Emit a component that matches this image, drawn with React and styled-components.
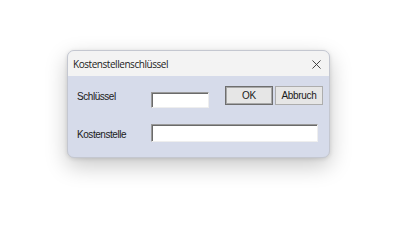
import styled, { createGlobalStyle } from "styled-components";

const Global = createGlobalStyle`
  html, body {
    margin: 0;
    padding: 0;
    background: #ffffff;
  }
  body {
    width: 400px;
    height: 247px;
    overflow: hidden;
    font-family: "Liberation Sans", Arial, sans-serif;
  }
`;

const Page = styled.div`
  padding: 50px 0 0 67px;
`;

const Dialog = styled.div`
  width: 263px;
  height: 108px;
  border-radius: 7px;
  overflow: hidden;
  background: #d6dbea;
  border: 1px solid #c4c7d0;
  box-sizing: border-box;
  box-shadow: 0 8px 22px rgba(0, 0, 0, 0.22), 0 1px 4px rgba(0, 0, 0, 0.12);
  display: flex;
  flex-direction: column;
`;

const TitleBar = styled.div`
  height: 25px;
  background: #f3f3f3;
  display: flex;
  align-items: center;
  justify-content: space-between;
  padding: 0 8px 0 5px;
  font-family: "Open Sans", "Noto Sans", sans-serif;
  font-size: 10px;
  letter-spacing: -0.45px;
  color: #1b1b1b;
`;

const Close = styled.svg`
  width: 9px;
  height: 9px;
  margin-top: 1px;
`;

const Body = styled.div`
  padding: 10px 0 0 9px;
  display: flex;
  flex-direction: column;
`;

const Row = styled.div`
  display: flex;
  align-items: flex-start;
  margin-top: ${(p) => p.$gap || 0}px;
`;

const Label = styled.div`
  width: 74px;
  margin-top: ${(p) => p.$offset}px;
  line-height: 16px;
  font-size: 10px;
  letter-spacing: -0.45px;
  color: #1a1a1a;
`;

const Field = styled.div`
  width: ${(p) => p.$w}px;
  height: ${(p) => p.$h}px;
  margin-top: ${(p) => p.$offset || 0}px;
  background: #ffffff;
  box-sizing: border-box;
  border-top: 1px solid #9a9a9a;
  border-left: 1px solid #9a9a9a;
  border-right: 1px solid #eeeeee;
  border-bottom: 1px solid #eeeeee;
  box-shadow: inset 1px 1px 0 #6a6a6a;
`;

const Buttons = styled.div`
  display: flex;
  gap: 2px;
  margin-left: 16px;
`;

const Button = styled.div`
  width: ${(p) => p.$w}px;
  height: 19px;
  box-sizing: border-box;
  background: #e6e6e6;
  border: 1px solid ${(p) => (p.$default ? "#6e6e6e" : "#adadad")};
  box-shadow: ${(p) => (p.$default ? "inset 0 0 0 1px #a8a8a8" : "none")};
  display: flex;
  align-items: center;
  justify-content: center;
  font-size: 10px;
  letter-spacing: -0.3px;
  color: #1a1a1a;
`;

export default function App() {
  return (
    <Page>
      <Global />
      <Dialog>
        <TitleBar>
          <span>Kostenstellenschlüssel</span>
          <Close viewBox="0 0 10 10">
            <path d="M0.5 0.5 L9.5 9.5 M9.5 0.5 L0.5 9.5" stroke="#333" strokeWidth="1" fill="none" />
          </Close>
        </TitleBar>
        <Body>
          <Row>
            <Label $offset={3}>Schlüssel</Label>
            <Field $w={58} $h={16} $offset={6} />
            <Buttons>
              <Button $w={48} $default>OK</Button>
              <Button $w={48}>Abbruch</Button>
            </Buttons>
          </Row>
          <Row $gap={16}>
            <Label $offset={3}>Kostenstelle</Label>
            <Field $w={167} $h={18} />
          </Row>
        </Body>
      </Dialog>
    </Page>
  );
}
